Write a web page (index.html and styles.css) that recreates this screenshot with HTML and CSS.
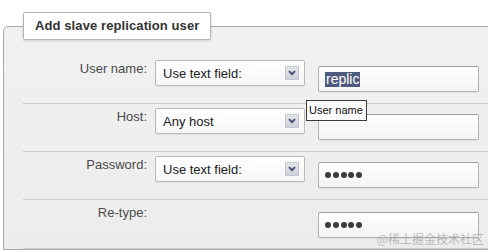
FILE: index.html
```html
<!DOCTYPE html>
<html lang="en">
<head>
    <meta charset="UTF-8">
    <meta name="viewport" content="width=device-width, initial-scale=1.0">
    <title>Add slave replication user</title>
    <link rel="stylesheet" href="styles.css">
</head>
<body>
    <fieldset class="panel">
        <legend class="panel-title">Add slave replication user</legend>

        <div class="row">
            <label class="row-label">User name:</label>
            <div class="select">
                <span>Use text field:</span>
                <span class="select-arrow">
                    <svg width="8" height="6" viewBox="0 0 8 6"><path d="M1 1.2 L4 4.2 L7 1.2" fill="none" stroke="#3c4770" stroke-width="1.8"/></svg>
                </span>
            </div>
            <div class="text-input"><span class="selected">replic</span></div>
        </div>

        <div class="row">
            <label class="row-label">Host:</label>
            <div class="select">
                <span>Any host</span>
                <span class="select-arrow">
                    <svg width="8" height="6" viewBox="0 0 8 6"><path d="M1 1.2 L4 4.2 L7 1.2" fill="none" stroke="#3c4770" stroke-width="1.8"/></svg>
                </span>
            </div>
            <div class="text-input"></div>
        </div>

        <div class="row">
            <label class="row-label">Password:</label>
            <div class="select">
                <span>Use text field:</span>
                <span class="select-arrow">
                    <svg width="8" height="6" viewBox="0 0 8 6"><path d="M1 1.2 L4 4.2 L7 1.2" fill="none" stroke="#3c4770" stroke-width="1.8"/></svg>
                </span>
            </div>
            <div class="text-input">
                <span class="dot"></span><span class="dot"></span><span class="dot"></span><span class="dot"></span><span class="dot"></span>
            </div>
        </div>

        <div class="row row-last">
            <label class="row-label">Re-type:</label>
            <div class="select-spacer"></div>
            <div class="text-input input-low">
                <span class="dot"></span><span class="dot"></span><span class="dot"></span><span class="dot"></span><span class="dot"></span>
            </div>
        </div>
    </fieldset>

    <div class="tooltip">User name</div>
    <div class="watermark">@稀土掘金技术社区</div>
</body>
</html>
```

FILE: styles.css
```css
html, body {
    margin: 0;
    padding: 0;
    background-color: #fff;
    overflow: hidden;
}
body {
    position: relative;
    width: 488px;
    height: 250px;
    padding-top: 12px;
    box-sizing: border-box;
    font-family: "Liberation Sans", Arial, sans-serif;
    font-size: 13px;
}
.panel {
    width: 560px;
    margin: 0 0 0 3px;
    padding: 16px 0 0 19px;
    border: 1px solid #a9a9a9;
    border-radius: 5px 0 0 0;
    background: linear-gradient(#f1f1f1, #ececec);
    box-sizing: border-box;
}
.panel-title {
    margin: 0;
    padding: 0 11px 0 11px;
    height: 28px;
    line-height: 26px;
    box-sizing: border-box;
    background-color: #fff;
    border: 1px solid #b4b4b4;
    border-radius: 2px;
    box-shadow: 0 1px 3px rgba(0, 0, 0, 0.15);
    font-weight: bold;
    font-size: 13px;
    letter-spacing: 0.1px;
    color: #333;
}
.row {
    display: flex;
    align-items: flex-start;
    height: 48px;
    padding-top: 4px;
    box-sizing: border-box;
    border-bottom: 1px solid #cdcdcd;
}
.row-last {
    height: 49px;
}
.row-label {
    width: 124px;
    margin-right: 8px;
    padding-top: 1px;
    line-height: 16px;
    text-align: right;
    color: #4a4a4a;
}
.select {
    display: flex;
    align-items: center;
    justify-content: space-between;
    width: 150px;
    height: 26px;
    margin-right: 13px;
    padding: 0 5px 0 7px;
    box-sizing: border-box;
    border: 1px solid #b9b9b9;
    border-radius: 2px;
    background: linear-gradient(#fff, #f6f6f6);
    box-shadow: 0 1px 1px rgba(0, 0, 0, 0.06);
    color: #222;
}
.select-spacer {
    width: 150px;
    margin-right: 13px;
}
.select-arrow {
    display: flex;
    align-items: center;
    justify-content: center;
    width: 14px;
    height: 14px;
    box-sizing: border-box;
    border: 1px solid #c3c6cd;
    background: linear-gradient(#e3e5ea, #cfd2d9);
}
.text-input {
    display: flex;
    align-items: center;
    width: 161px;
    height: 26px;
    margin-top: 6px;
    padding-left: 6px;
    box-sizing: border-box;
    border: 1px solid #b3b3b3;
    border-top-color: #a0a0a0;
    border-radius: 2px;
    background: linear-gradient(#fff, #f3f3f3);
    box-shadow: 0 1px 1px rgba(0, 0, 0, 0.06);
}
.input-low {
    margin-top: 8px;
}
.selected {
    padding: 0 1px;
    line-height: 15px;
    font-size: 14px;
    color: #fff;
    background-color: #4f5b7c;
}
.dot {
    display: inline-block;
    width: 6px;
    height: 6px;
    margin-right: 1.75px;
    border-radius: 50%;
    background-color: #3a3a3a;
}
.tooltip {
    position: absolute;
    left: 306px;
    top: 100px;
    height: 21px;
    padding: 0 3px 0 2px;
    box-sizing: border-box;
    border: 1px solid #3a3a3a;
    background-color: #fbfbfb;
    font-size: 11px;
    line-height: 19px;
    white-space: nowrap;
    color: #111;
}
.watermark {
    position: absolute;
    right: 4px;
    bottom: 3px;
    font-family: "Noto Sans CJK SC", sans-serif;
    font-size: 12px;
    color: rgba(140, 140, 140, 0.55);
}
```
